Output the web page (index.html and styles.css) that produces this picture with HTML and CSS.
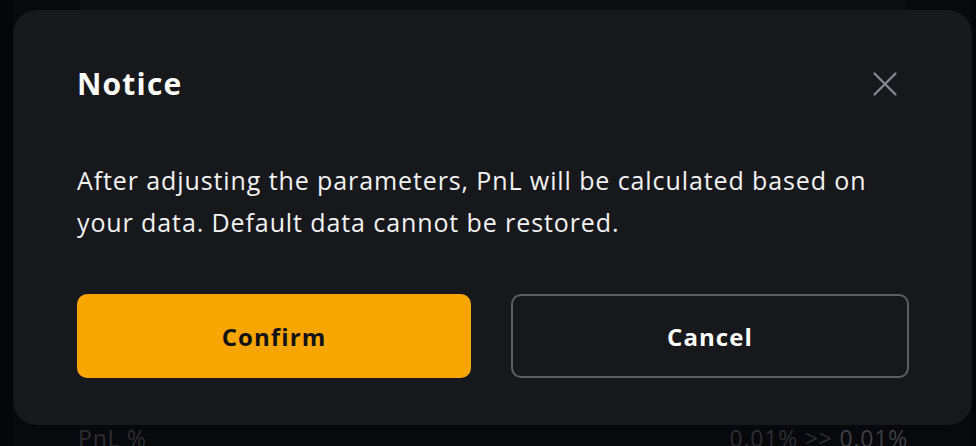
FILE: index.html
```html
<!DOCTYPE html>
<html lang="en">
<head>
    <meta charset="UTF-8">
    <meta name="viewport" content="width=device-width, initial-scale=1.0">
    <title>Notice</title>
    <link rel="stylesheet" href="styles.css">
</head>
<body>
  <div class="page">
    <div class="sheet">
      <div class="card"></div>
      <div class="pnl-row">
        <span class="pnl-label">PnL %</span>
        <span class="pnl-value">0.01% &gt;&gt; <b>0.01%</b></span>
      </div>
    </div>
  </div>

  <div class="mask">
    <div class="modal">
      <div class="modal-head">
        <h2>Notice</h2>
        <button class="close" aria-label="Close">
          <svg width="24" height="24" viewBox="0 0 24 24" fill="none">
            <path d="M1.5 1.5L22.5 22.5M22.5 1.5L1.5 22.5" stroke="#83868c" stroke-width="2.4" stroke-linecap="round"/>
          </svg>
        </button>
      </div>
      <p class="modal-text">After adjusting the parameters, PnL will be calculated based on your data. Default data cannot be restored.</p>
      <div class="modal-actions">
        <button class="btn btn-primary">Confirm</button>
        <button class="btn btn-ghost">Cancel</button>
      </div>
    </div>
  </div>
</body>
</html>
```

FILE: styles.css
```css
body {
    margin: 0;
    height: 100vh;
    overflow: hidden;
    background-color: #050608;
    font-family: "Open Sans", "Noto Sans", Arial, sans-serif;
}
.page {
    height: 100%;
    padding: 0 4px 0 13px;
}
.sheet {
    height: 100%;
    background-color: #08090c;
    display: flex;
    flex-direction: column;
    justify-content: space-between;
}
.card {
    margin: 0 67px;
    height: 160px;
    background-color: #0d0e11;
    border-radius: 0 0 16px 16px;
}
.pnl-row {
    display: flex;
    justify-content: space-between;
    padding: 0 64px 0 65px;
    height: 23px;
    font-size: 23px;
    line-height: 30px;
    letter-spacing: 0.8px;
    color: #2c2d31;
}
.pnl-value b {
    font-weight: 400;
    color: #3e3f44;
}
.mask {
    position: fixed;
    inset: 0;
    padding: 10px 4px 0 13px;
}
.modal {
    background-color: #17181c;
    border-radius: 24px;
    padding: 50px 63px 47px 64px;
    height: 415px;
    box-sizing: border-box;
}
.modal-head {
    display: flex;
    justify-content: space-between;
    align-items: center;
}
.modal-head h2 {
    margin: 0;
    font-size: 30px;
    line-height: 48px;
    font-weight: 700;
    letter-spacing: 1.2px;
    color: #ffffff;
}
.close {
    background: none;
    border: none;
    padding: 0;
    margin-right: 12px;
    display: flex;
    cursor: pointer;
}
.modal-text {
    margin: 51px 0 51px;
    font-size: 25px;
    line-height: 42px;
    letter-spacing: 0.9px;
    color: #f2f2f3;
}
.modal-actions {
    display: flex;
    gap: 40px;
}
.btn {
    flex: 1;
    height: 84px;
    border-radius: 10px;
    font-family: inherit;
    font-size: 24px;
    font-weight: 700;
    letter-spacing: 1.1px;
    cursor: pointer;
}
.btn-primary {
    background-color: #f7a600;
    border: none;
    color: #121214;
}
.btn-ghost {
    background-color: transparent;
    border: 2px solid #5e5f63;
    color: #ffffff;
}
```
